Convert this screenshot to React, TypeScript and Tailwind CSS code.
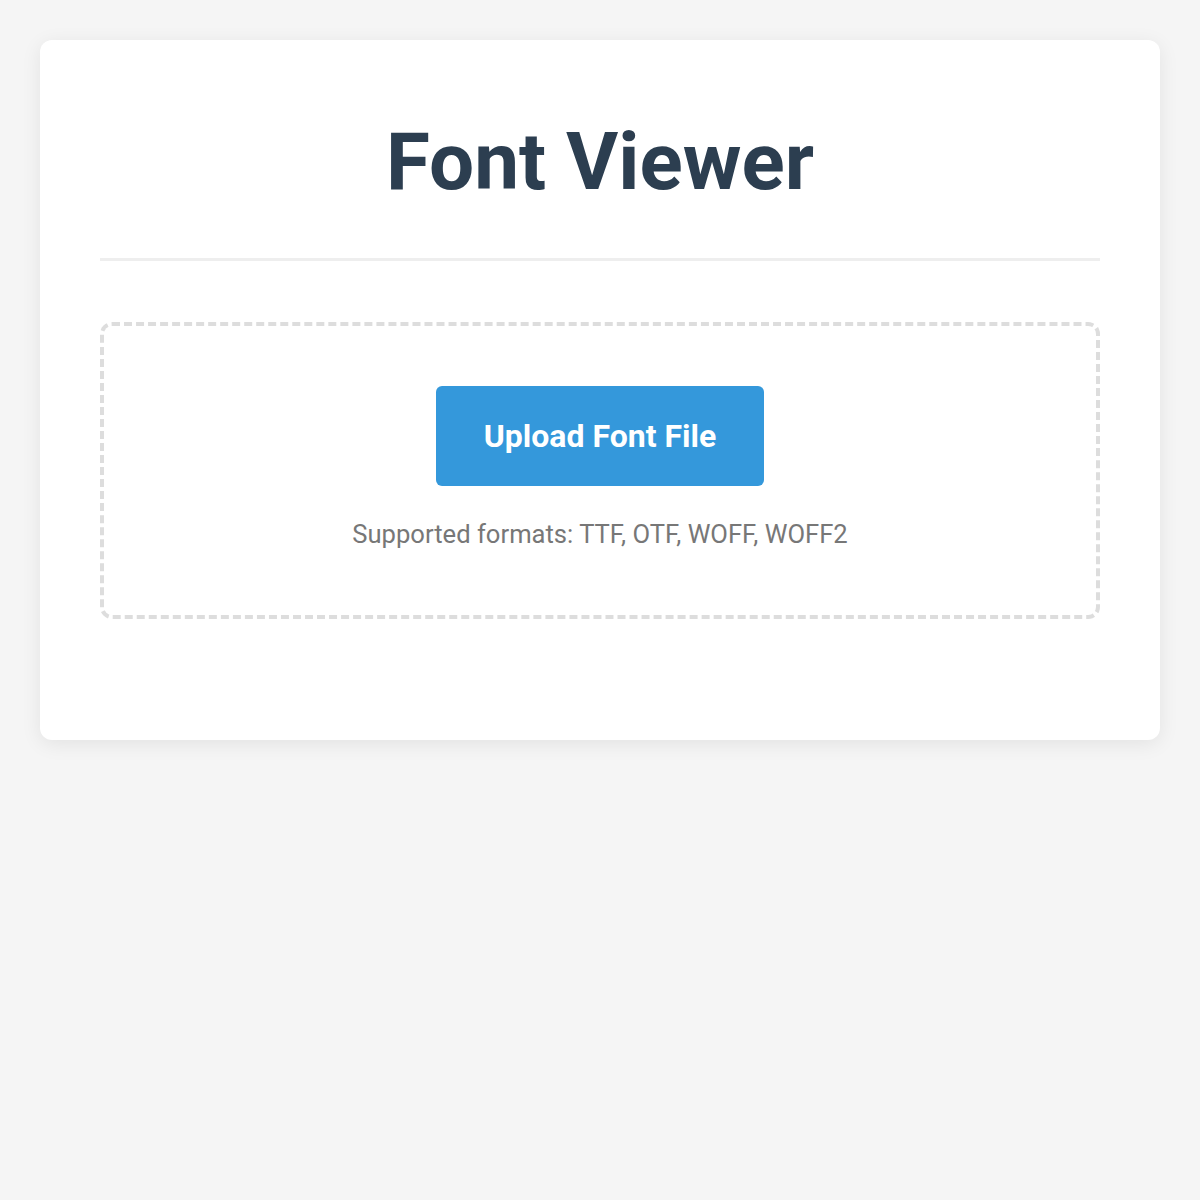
const App = () => {
    return (
        <div className="min-h-screen bg-[#f5f5f5] p-[40px] font-['Roboto',sans-serif]">
            <div className="bg-white rounded-xl shadow-[0_4px_20px_rgba(0,0,0,0.08)] px-[60px] pt-[74px] pb-[121px]">
                <div className="border-b-[3px] border-[#eeeeee] pb-[48px]">
                    <h1 className="text-center text-[80px] leading-[96px] font-bold text-[#2c3e50]">
                        Font Viewer
                    </h1>
                </div>
                <div className="mt-[61px] border-4 border-dashed border-[#dddddd] rounded-xl pt-[60px] pb-[66px] flex flex-col items-center">
                    <button className="h-[100px] px-[48px] bg-[#3498db] text-white rounded-md text-[32px] font-bold cursor-pointer">
                        Upload Font File
                    </button>
                    <p className="mt-[33px] text-[25.6px] leading-[30px] text-[#777777]">
                        Supported formats: TTF, OTF, WOFF, WOFF2
                    </p>
                </div>
            </div>
        </div>
    );
};

export default App;
